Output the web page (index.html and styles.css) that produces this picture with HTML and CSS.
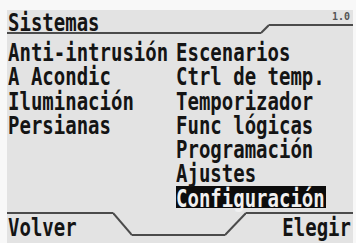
FILE: index.html
```html
<!DOCTYPE html>
<html>
<head>
<meta charset="utf-8">
<link rel="stylesheet" href="styles.css">
</head>
<body>
<div class="screen">
  <div class="header">
    <div class="tab-l"><span class="t">Sistemas</span></div>
    <svg class="slant-h" width="8" height="24" viewBox="0 0 8 24"><line x1="0" y1="23" x2="8" y2="15" stroke="#4b4b4b" stroke-width="2"/></svg>
    <div class="tab-r"><span class="ver">1.0</span></div>
  </div>
  <div class="main">
    <div class="col">
      <div class="row"><span class="t">Anti-intrusión</span></div>
      <div class="row"><span class="t">A Acondic</span></div>
      <div class="row"><span class="t">Iluminación</span></div>
      <div class="row"><span class="t">Persianas</span></div>
    </div>
    <div class="col">
      <div class="row"><span class="t">Escenarios</span></div>
      <div class="row"><span class="t">Ctrl de temp.</span></div>
      <div class="row"><span class="t">Temporizador</span></div>
      <div class="row"><span class="t">Func lógicas</span></div>
      <div class="row"><span class="t">Programación</span></div>
      <div class="row"><span class="t">Ajustes</span></div>
      <div class="row"><span class="sel"><span class="t">Configuración</span></span></div>
    </div>
  </div>
  <div class="footer">
    <div class="ft-l"><span class="t">Volver</span></div>
    <svg class="slant" width="19" height="31" viewBox="0 0 19 31"><line x1="0" y1="1" x2="19" y2="23" stroke="#4b4b4b" stroke-width="2"/></svg>
    <div class="ft-m"></div>
    <svg class="slant" width="21" height="31" viewBox="0 0 21 31"><line x1="0" y1="23" x2="21" y2="1" stroke="#4b4b4b" stroke-width="2"/></svg>
    <div class="ft-r"><span class="t">Elegir</span></div>
  </div>
</div>
</body>
</html>
```

FILE: styles.css
```css
html, body {
  margin: 0;
  padding: 0;
  background: #f8f8f8;
  overflow: hidden;
}
body {
  width: 356px;
  height: 243px;
}
.screen {
  margin: 10px 0 0 7px;
  width: 346px;
  height: 233px;
  background: #e3e3e3;
  display: flex;
  flex-direction: column;
  font-family: "DejaVu Sans Mono", monospace;
  font-weight: bold;
  font-size: 19px;
  line-height: 24px;
  color: #141414;
}
.t {
  display: inline-block;
  white-space: pre;
  vertical-align: top;
  transform: scaleY(1.316);
  transform-origin: 50% 12.7px;
}
.header {
  display: flex;
  height: 24px;
  flex: none;
}
.tab-l {
  width: 254px;
  height: 24px;
  box-sizing: border-box;
  border-bottom: 2px solid #4b4b4b;
  padding-left: 1px;
  flex: none;
}
.slant-h, .slant {
  display: block;
  flex: none;
}
.tab-r {
  flex: 1;
  height: 16px;
  box-sizing: border-box;
  border-bottom: 2px solid #4b4b4b;
  text-align: right;
  padding-right: 3px;
}
.ver {
  display: inline-block;
  font-size: 10px;
  line-height: 13px;
  color: #555;
  vertical-align: top;
}
.main {
  flex: none;
  height: 178px;
  box-sizing: border-box;
  padding-top: 6px;
  display: grid;
  grid-template-columns: 169px 1fr;
}
.col {
  display: flex;
  flex-direction: column;
}
.col:first-child {
  padding-left: 1px;
}
.row {
  height: 24.3px;
  line-height: 24.3px;
  white-space: nowrap;
}
.sel {
  display: inline-block;
  vertical-align: top;
  height: 22px;
  background: #0c0c0c;
  color: #f0f0f0;
  padding-right: 1px;
}
.footer {
  flex: none;
  height: 31px;
  display: flex;
  align-items: flex-start;
}
.ft-l {
  width: 106px;
  height: 31px;
  box-sizing: border-box;
  border-top: 2px solid #4b4b4b;
  padding: 1px 0 0 1px;
  flex: none;
}
.ft-m {
  width: 93px;
  height: 24px;
  box-sizing: border-box;
  border-bottom: 2px solid #4b4b4b;
  flex: none;
}
.ft-r {
  flex: 1;
  height: 31px;
  box-sizing: border-box;
  border-top: 2px solid #4b4b4b;
  padding: 1px 2px 0 0;
  text-align: right;
}
```
